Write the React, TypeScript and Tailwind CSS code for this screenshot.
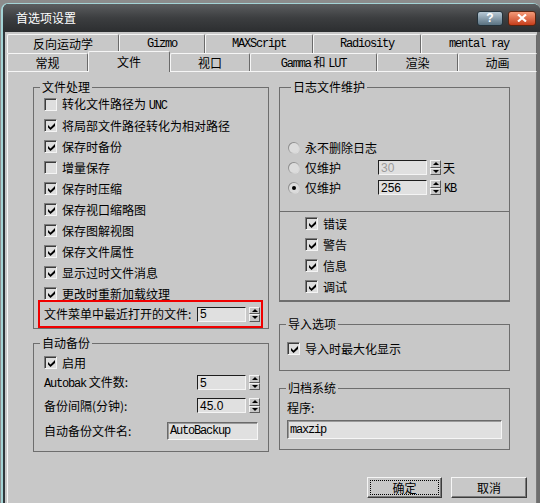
import React from 'react'

function Latin({ children }: { children: React.ReactNode }) {
  return <span className="font-['Liberation_Mono',monospace] text-[12px] tracking-[-1.2px]">{children}</span>
}

function Check({ on }: { on?: boolean }) {
  return (
    <span className="flex h-[13px] w-[13px] shrink-0 items-center justify-center border border-t-[#7c7c7c] border-l-[#7c7c7c] border-r-[#f4f4f4] border-b-[#f4f4f4] bg-[#dedede] shadow-[inset_1px_1px_0_#3c3c3c]">
      {on && (
        <svg width="7" height="7" viewBox="0 0 7 7" className="ml-[1px] mt-[1px]">
          <path d="M0 2 L2.5 4.5 L7 0 V3 L2.5 7 L0 4.5 Z" fill="#000" />
        </svg>
      )}
    </span>
  )
}

function Radio({ on }: { on?: boolean }) {
  return (
    <span className="flex h-[12px] w-[12px] shrink-0 rounded-full bg-gradient-to-br from-[#6e6e6e] to-[#f6f6f6] p-[1px]">
      <span className="flex flex-1 items-center justify-center rounded-full bg-[#dcdcdc]">
        {on && <span className="h-[4px] w-[4px] rounded-full bg-black" />}
      </span>
    </span>
  )
}

function SpinBtn() {
  return (
    <div className="ml-[3px] flex h-[15px] w-[11px] flex-col">
      <div className="flex flex-1 items-center justify-center border border-t-[#f4f4f4] border-l-[#f4f4f4] border-r-[#5a5a5a] border-b-[#5a5a5a] bg-[#c8c8c8]">
        <span className="h-0 w-0 border-x-[3px] border-b-[3px] border-x-transparent border-b-black" />
      </div>
      <div className="flex flex-1 items-center justify-center border border-t-[#f4f4f4] border-l-[#f4f4f4] border-r-[#5a5a5a] border-b-[#5a5a5a] bg-[#c8c8c8]">
        <span className="h-0 w-0 border-x-[3px] border-t-[3px] border-x-transparent border-t-black" />
      </div>
    </div>
  )
}

function Spinner({ value, disabled }: { value: string; disabled?: boolean }) {
  return (
    <div className="flex items-center">
      <div
        className={
          disabled
            ? "flex h-[15px] w-[49px] items-center border border-t-[#1e1e1e] border-l-[#1e1e1e] border-r-[#f4f4f4] border-b-[#f4f4f4] bg-[#e0e0e0] pl-[2px] font-['Liberation_Sans',sans-serif] text-[12px] text-[#9c9c9c]"
            : "flex h-[15px] w-[49px] items-center border border-t-[#1e1e1e] border-l-[#1e1e1e] border-r-[#f4f4f4] border-b-[#f4f4f4] bg-[#e0e0e0] pl-[2px] font-['Liberation_Sans',sans-serif] text-[12px] text-black"
        }
      >
        {value}
      </div>
      <SpinBtn />
    </div>
  )
}

function Group({ title, titleCls, className, children }: { title: string; titleCls: string; className: string; children?: React.ReactNode }) {
  return (
    <div className={`relative border border-[#6e6e6e] ${className}`}>
      <span className={`absolute -top-[7px] bg-[#c8c8c8] px-[2px] leading-[12px] ${titleCls}`}>{title}</span>
      {children}
    </div>
  )
}

function Row({ on, children }: { on?: boolean; children: React.ReactNode }) {
  return (
    <div className="flex h-[13px] items-center gap-[5px]">
      <Check on={on} />
      <span className="whitespace-nowrap">{children}</span>
    </div>
  )
}

const row1 = [
  { label: <span>反向运动学</span>, cls: 'w-[112px]' },
  { label: <Latin>Gizmo</Latin>, cls: 'w-[86px]' },
  { label: <Latin>MAXScript</Latin>, cls: 'w-[108px]' },
  { label: <Latin>Radiosity</Latin>, cls: 'w-[108px]' },
  { label: <Latin>mental ray</Latin>, cls: 'w-[116px]' },
]

const row2 = [
  { label: <span>常规</span>, cls: 'w-[81px]' },
  { label: <span>文件</span>, cls: 'w-[82px]', on: true },
  { label: <span>视口</span>, cls: 'w-[80px]' },
  { label: <span><Latin>Gamma</Latin> 和 <Latin>LUT</Latin></span>, cls: 'w-[127px]' },
  { label: <span>渲染</span>, cls: 'w-[81px]' },
  { label: <span>动画</span>, cls: 'w-[79px]' },
]

const fileRows: [boolean, React.ReactNode][] = [
  [false, <>转化文件路径为 <Latin>UNC</Latin></>],
  [true, '将局部文件路径转化为相对路径'],
  [true, '保存时备份'],
  [false, '增量保存'],
  [true, '保存时压缩'],
  [true, '保存视口缩略图'],
  [true, '保存图解视图'],
  [true, '保存文件属性'],
  [true, '显示过时文件消息'],
  [true, '更改时重新加载纹理'],
]

export default function App() {
  return (
    <div className="h-[503px] w-[540px] overflow-hidden bg-[#8c8c8c] pl-[1px] pt-[3px] font-['Noto_Sans_CJK_SC',sans-serif] text-[12px] leading-[12px] text-black">
      <div className="flex h-[520px] w-[539px] flex-col overflow-hidden rounded-t-[7px] border-l-2 border-t border-[#a4d4d6] bg-[#30363a]">
        {/* title bar */}
        <div className="flex h-[28px] shrink-0 items-center bg-gradient-to-b from-[#5c5e60] via-[#3c3e40] to-[#2c2e30] pl-[13px] pr-[4px]">
          <span className="flex-1 text-[12px] text-white">首选项设置</span>
          <div className="flex h-[15px] w-[26px] items-center justify-center rounded-[3px] border border-[#24323a] bg-gradient-to-b from-[#b8cad6] to-[#5a7282] font-['Liberation_Sans',sans-serif] text-[12px] font-bold text-white">?</div>
          <div className="ml-[5px] flex h-[15px] w-[28px] items-center justify-center rounded-[3px] border border-[#5a2410] bg-gradient-to-b from-[#f49a78] to-[#c63c18]">
            <svg width="10" height="8" viewBox="0 0 10 8">
              <path d="M1 0.5 L9 7.5 M9 0.5 L1 7.5" stroke="#fff" strokeWidth="2.2" />
            </svg>
          </div>
        </div>
        {/* body */}
        <div className="flex flex-1 pl-[2px]">
          <div className="flex w-[532px] flex-col bg-[#c8c8c8] pl-[2px] pt-[2px]">
            {/* tab rows */}
            <div className="flex h-[19px]">
              {row1.map((t, i) => (
                <div key={i} className={`flex items-center justify-center rounded-t-[2px] border-l border-r border-t border-l-[#f6f6f6] border-t-[#f6f6f6] border-r-[#6a6a6a] bg-[#c8c8c8] ${t.cls}`}>
                  {t.label}
                </div>
              ))}
            </div>
            <div className="flex h-[18px] items-end">
              {row2.map((t, i) =>
                t.on ? (
                  <div key={i} className={`relative top-[1px] z-10 flex h-[21px] items-center justify-center rounded-t-[2px] border-l border-r border-t border-l-[#f6f6f6] border-t-[#f6f6f6] border-r-[#6a6a6a] bg-[#c8c8c8] pb-[1px] ${t.cls}`}>
                    {t.label}
                  </div>
                ) : (
                  <div key={i} className={`flex h-[18px] items-center justify-center rounded-t-[2px] border-l border-r border-t border-l-[#f6f6f6] border-t-[#f6f6f6] border-r-[#6a6a6a] bg-[#c8c8c8] ${t.cls}`}>
                    {t.label}
                  </div>
                )
              )}
            </div>
            {/* panel */}
            <div className="flex w-[530px] flex-1 flex-col border-l border-r border-t border-l-[#f6f6f6] border-t-[#f6f6f6] border-r-[#7a7a7a] pl-[25px] pt-[15px]">
              <div className="flex">
                {/* left column */}
                <div className="flex w-[236px] flex-col">
                  <Group title="文件处理" titleCls="left-[6px]" className="h-[242px]">
                    <div className="pt-[10px]">
                      <div className="flex flex-col gap-[8px] pl-[10px]">
                        {fileRows.map(([on, label], i) => (
                          <Row key={i} on={on}>{label}</Row>
                        ))}
                      </div>
                      <div className="ml-[4px] flex h-[28px] w-[225px] items-center justify-between border-2 border-[#f00000] pl-[4px] pr-[1px]">
                        <span className="whitespace-nowrap">文件菜单中最近打开的文件:</span>
                        <Spinner value="5" />
                      </div>
                    </div>
                  </Group>
                  <Group title="自动备份" titleCls="left-[6px]" className="mt-[14px] h-[109px]">
                    <div className="pl-[10px] pt-[12px]">
                      <Row on>启用</Row>
                      <div className="mt-[6px] flex h-[15px] items-center">
                        <span className="w-[153px] whitespace-nowrap"><Latin>Autobak</Latin> 文件数:</span>
                        <Spinner value="5" />
                      </div>
                      <div className="mt-[8px] flex h-[15px] items-center">
                        <span className="w-[153px] whitespace-nowrap">备份间隔(分钟):</span>
                        <Spinner value="45.0" />
                      </div>
                      <div className="mt-[9px] flex h-[18px] items-center">
                        <span className="w-[123px] whitespace-nowrap">自动备份文件名:</span>
                        <div className="flex h-[18px] w-[91px] items-center border border-t-[#6a6a6a] border-l-[#6a6a6a] border-r-[#f6f6f6] border-b-[#f6f6f6] bg-[#e0e0e0] pl-[2px] shadow-[inset_1px_1px_0_#9a9a9a]">
                          <Latin>AutoBackup</Latin>
                        </div>
                      </div>
                    </div>
                  </Group>
                </div>
                {/* right column */}
                <div className="ml-[10px] flex w-[231px] flex-col">
                  <Group title="日志文件维护" titleCls="left-[11px]" className="h-[215px] border-b-2">
                    <div className="flex h-[124px] flex-col gap-[5px] border-b border-[#6e6e6e] pl-[8px] pt-[52px]">
                      <div className="flex h-[15px] items-center">
                        <Radio />
                        <span className="ml-[5px]">永不删除日志</span>
                      </div>
                      <div className="flex h-[15px] items-center">
                        <Radio />
                        <span className="ml-[5px] w-[73px]">仅维护</span>
                        <Spinner value="30" disabled />
                        <span className="ml-[2px]">天</span>
                      </div>
                      <div className="flex h-[15px] items-center">
                        <Radio on />
                        <span className="ml-[5px] w-[73px]">仅维护</span>
                        <Spinner value="256" />
                        <span className="ml-[3px]"><Latin>KB</Latin></span>
                      </div>
                    </div>
                    <div className="flex flex-col gap-[8px] pl-[25px] pt-[5px]">
                      <Row on>错误</Row>
                      <Row on>警告</Row>
                      <Row on>信息</Row>
                      <Row on>调试</Row>
                    </div>
                  </Group>
                  <Group title="导入选项" titleCls="left-[6px]" className="mt-[22px] h-[47px]">
                    <div className="pl-[7px] pt-[17px]">
                      <Row on>导入时最大化显示</Row>
                    </div>
                  </Group>
                  <Group title="归档系统" titleCls="left-[6px]" className="mt-[17px] h-[62px]">
                    <div className="pl-[7px] pt-[13px]">
                      <div>程序:</div>
                      <div className="mt-[6px] flex h-[19px] w-[215px] items-center border border-t-[#6a6a6a] border-l-[#6a6a6a] border-r-[#f6f6f6] border-b-[#f6f6f6] bg-[#e0e0e0] pl-[2px] shadow-[inset_1px_1px_0_#9a9a9a]">
                        <Latin>maxzip</Latin>
                      </div>
                    </div>
                  </Group>
                </div>
              </div>
              {/* buttons */}
              <div className="mt-[25px] flex justify-end gap-[9px] pr-[9px]">
                <div className="h-[21px] w-[75px] border border-t-[#f6f6f6] border-l-[#f6f6f6] border-r-[#3c3c3c] border-b-[#3c3c3c] bg-[#c8c8c8] p-[2px] shadow-[inset_-1px_-1px_0_#7a7a7a]">
                  <div className="flex h-full w-full items-center justify-center border border-dotted border-black">确定</div>
                </div>
                <div className="h-[21px] w-[76px] border border-t-[#f6f6f6] border-l-[#f6f6f6] border-r-[#3c3c3c] border-b-[#3c3c3c] bg-[#c8c8c8] p-[2px] shadow-[inset_-1px_-1px_0_#7a7a7a]">
                  <div className="flex h-full w-full items-center justify-center">取消</div>
                </div>
              </div>
            </div>
          </div>
          <div className="w-[3px] bg-[#6e6e6e]" />
        </div>
      </div>
    </div>
  )
}
